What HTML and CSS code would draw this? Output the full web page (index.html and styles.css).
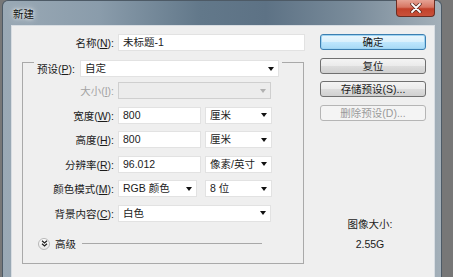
FILE: index.html
```html
<!DOCTYPE html>
<html lang="zh-CN">
<head>
    <meta charset="UTF-8">
    <title>新建</title>
    <link rel="stylesheet" href="styles.css">
</head>
<body>
    <div class="window">
        <div class="titlebar">
            <span class="title">新建</span>
            <div class="close">
                <svg width="12" height="10" viewBox="0 0 12 10">
                    <path d="M2 1 L10 9 M10 1 L2 9" stroke="#5a2a20" stroke-width="3.4" stroke-linecap="round"/>
                    <path d="M2 1 L10 9 M10 1 L2 9" stroke="#ffffff" stroke-width="1.8" stroke-linecap="round"/>
                </svg>
            </div>
        </div>
        <div class="client">
            <div class="left">
                <div class="name-row">
                    <span class="lbl name-lbl">名称(<u>N</u>):</span>
                    <div class="field w-name">未标题-1</div>
                </div>

                <div class="group">
                    <div class="preset">
                        <span class="lbl">预设(<u>P</u>):</span>
                        <div class="field select w-preset">自定<i class="arrow"></i></div>
                    </div>

                    <div class="rows">
                        <div class="row">
                            <span class="lbl row-lbl disabled">大小(<u>I</u>):</span>
                            <div class="field select off w-full"><i class="arrow"></i></div>
                        </div>
                        <div class="row">
                            <span class="lbl row-lbl">宽度(<u>W</u>):</span>
                            <div class="field w-num">800</div>
                            <div class="field select w-unit">厘米<i class="arrow"></i></div>
                        </div>
                        <div class="row">
                            <span class="lbl row-lbl">高度(<u>H</u>):</span>
                            <div class="field w-num">800</div>
                            <div class="field select w-unit">厘米<i class="arrow"></i></div>
                        </div>
                        <div class="row">
                            <span class="lbl row-lbl">分辨率(<u>R</u>):</span>
                            <div class="field w-num">96.012</div>
                            <div class="field select w-unit">像素/英寸<i class="arrow"></i></div>
                        </div>
                        <div class="row">
                            <span class="lbl row-lbl">颜色模式(<u>M</u>):</span>
                            <div class="field select w-mode">RGB 颜色<i class="arrow"></i></div>
                            <div class="field select w-unit">8 位<i class="arrow"></i></div>
                        </div>
                        <div class="row">
                            <span class="lbl row-lbl">背景内容(<u>C</u>):</span>
                            <div class="field select w-full">白色<i class="arrow"></i></div>
                        </div>
                    </div>

                    <div class="advanced">
                        <span class="adv-icon">
                            <svg width="7" height="7" viewBox="0 0 7 7">
                                <path d="M1 0.8 L3.5 3 L6 0.8 M1 3.8 L3.5 6 L6 3.8" fill="none" stroke="#222" stroke-width="1.3"/>
                            </svg>
                        </span>
                        <span class="adv-text">高级</span>
                        <span class="adv-line"></span>
                    </div>
                </div>
            </div>

            <div class="right">
                <div class="btn default">确定</div>
                <div class="btn">复位</div>
                <div class="btn">存储预设(S)...</div>
                <div class="btn off">删除预设(D)...</div>
                <div class="info">
                    <div>图像大小:</div>
                    <div>2.55G</div>
                </div>
            </div>
        </div>
    </div>
</body>
</html>
```

FILE: styles.css
```css
body {
    margin: 0;
    background-color: #777;
    font-family: "Liberation Sans", "Noto Sans CJK SC", sans-serif;
    font-size: 10.5px;
    color: #1b1b1b;
    overflow: hidden;
}
u {
    text-decoration: underline;
    text-underline-offset: 1px;
}
.window {
    margin-left: 2px;
    width: 440px;
    height: 280px;
    border: 1px solid #4d5a66;
    border-bottom: none;
    border-radius: 6px 6px 0 0;
    background: linear-gradient(90deg, #9aa9b5 0%, #8a9cab 22%, #62788a 45%, #5d7285 60%, #7a8c9b 80%, #a4b0b9 100%);
    padding: 0 6px 0 8px;
    box-sizing: border-box;
    display: flex;
    flex-direction: column;
}
.titlebar {
    height: 24px;
    display: flex;
    align-items: flex-start;
}
.title {
    margin-top: 5px;
    margin-left: 2px;
    color: #111;
    text-shadow: 0 0 6px rgba(255,255,255,0.9), 0 0 3px rgba(255,255,255,0.8);
}
.close {
    margin-left: auto;
    margin-top: -1px;
    width: 39px;
    height: 17px;
    border: 1px solid #6b2d22;
    border-top: none;
    border-radius: 0 0 4px 4px;
    box-sizing: border-box;
    background: linear-gradient(180deg, #e6a394 0%, #d77562 45%, #c2412a 55%, #c9513a 100%);
    display: flex;
    align-items: center;
    justify-content: center;
}
.client {
    flex: 1;
    background-color: #efefef;
    border: 1px solid #d8dde2;
    display: flex;
}
.left {
    width: 293px;
    padding-top: 8px;
}
.lbl {
    white-space: nowrap;
}
.disabled {
    color: #a3a3a3;
}
.name-row {
    display: flex;
    align-items: center;
}
.name-lbl {
    width: 102px;
    text-align: right;
    margin-right: 4px;
}
.field {
    height: 17px;
    box-sizing: border-box;
    background-color: #fff;
    border: 1px solid #e2e2e2;
    padding-left: 4px;
    line-height: 15px;
    white-space: nowrap;
    display: flex;
    align-items: center;
}
.arrow {
    flex-shrink: 0;
    margin-left: auto;
    margin-right: 4px;
    width: 0;
    height: 0;
    border-left: 3.5px solid transparent;
    border-right: 3.5px solid transparent;
    border-top: 4px solid #111;
}
.field.off {
    background-color: #ececec;
    border-color: #cfcfcf;
}
.field.off .arrow {
    border-top-color: #b0b0b0;
}
.w-name { width: 187px; }
.w-preset { width: 199px; }
.w-full { width: 153px; }
.w-num { width: 83px; }
.w-unit { width: 67px; margin-left: 4px; }
.w-mode { width: 79px; }
.w-mode + .w-unit { margin-left: 8px; }
.group {
    margin-top: 11px;
    margin-left: 10px;
    width: 282px;
    height: 202px;
    box-sizing: border-box;
    border: 1px solid #a9a9a9;
}
.preset {
    margin-top: -4px;
    margin-left: 11px;
    padding: 0 3px;
    background-color: #efefef;
    display: inline-flex;
    align-items: center;
    gap: 5px;
}
.rows {
    margin-top: 5px;
    display: flex;
    flex-direction: column;
    gap: 7.6px;
}
.row {
    display: flex;
    align-items: center;
}
.row-lbl {
    width: 91px;
    text-align: right;
    margin-right: 4px;
}
.advanced {
    margin-top: 15px;
    margin-left: 15px;
    display: flex;
    align-items: center;
    height: 14px;
}
.adv-icon {
    width: 12px;
    height: 12px;
    box-sizing: border-box;
    border-radius: 50%;
    border: 1px solid #b8b8b8;
    background: linear-gradient(180deg, #ffffff 0%, #e8e8e8 100%);
    display: flex;
    align-items: center;
    justify-content: center;
}
.adv-text {
    margin-left: 5px;
}
.adv-line {
    margin-left: 6px;
    width: 180px;
    height: 1px;
    background-color: #a8a8a8;
}
.right {
    margin-left: 15px;
    padding-top: 8px;
    width: 106px;
    display: flex;
    flex-direction: column;
    gap: 7.5px;
}
.btn {
    height: 16px;
    box-sizing: border-box;
    border: 1px solid #707070;
    border-radius: 3px;
    background: linear-gradient(180deg, #f4f4f4 0%, #ebebeb 48%, #dddddd 52%, #d0d0d0 100%);
    text-align: center;
    line-height: 14px;
    white-space: nowrap;
    color: #1b1b1b;
}
.btn.default {
    border-color: #3c7fb1;
    background: linear-gradient(180deg, #eaf6fd 0%, #d9f0fc 48%, #bee6fd 52%, #a7d9f5 100%);
    box-shadow: 0 0 0 1px #9fd4f2 inset;
}
.btn.off {
    border-color: #b5b5b5;
    background: #f4f4f4;
    color: #9a9a9a;
}
.info {
    margin-top: 86px;
    padding-right: 6px;
    text-align: center;
    line-height: 20px;
}
```
